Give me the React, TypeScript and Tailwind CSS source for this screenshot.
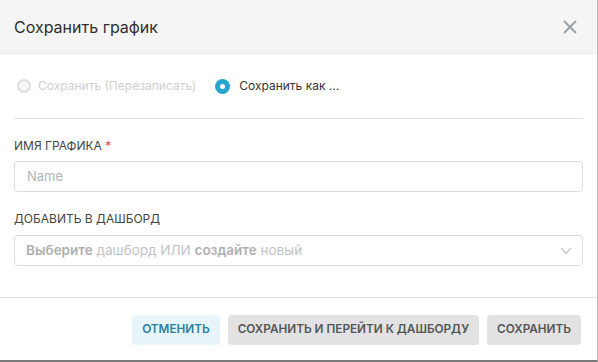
import React from "react";

export default function App() {
  return (
    <div className="w-[598px] h-[362px] bg-white flex flex-col border-r border-r-[#bdbdbd] border-b-2 border-b-[#7a7a7a]" style={{ fontFamily: "Inter, 'Noto Sans', sans-serif" }}>
      <div className="h-[54px] shrink-0 bg-[#f5f5f5] border-b border-[#e9e9e9] flex items-center justify-between pl-[14px] pr-[19px]">
        <span className="text-[16px] text-[#2f2f2f]">Сохранить график</span>
        <svg width="16" height="16" viewBox="0 0 16 16" fill="none">
          <path d="M2 2 L14 14 M14 2 L2 14" stroke="#9ca0ab" strokeWidth="2" />
        </svg>
      </div>
      <div className="px-[14px] flex flex-col">
        <div className="pt-[14px] pb-[14px] border-b border-[#e0e0e0] flex items-center gap-[19px] h-[65px]">
          <label className="flex items-center gap-[7px] pl-[3px]">
            <span className="w-[14px] h-[14px] rounded-full border-2 border-[#dedede] bg-[#f5f5f5]" />
            <span className="text-[12px] text-[#cfcfcf]">Сохранить (Перезаписать)</span>
          </label>
          <label className="flex items-center gap-[9px]">
            <span className="w-[15px] h-[15px] rounded-full bg-[#26a6cf] flex items-center justify-center">
              <span className="w-[5px] h-[5px] rounded-full bg-white" />
            </span>
            <span className="text-[12px] text-[#333]">Сохранить как ...</span>
          </label>
        </div>
        <div className="mt-[19px] text-[12px] leading-[16px] text-[#444] uppercase">
          ИМЯ ГРАФИКА<span className="text-[#e04848]"> *</span>
        </div>
        <div className="mt-[7px] h-[31px] border border-[#dcdce4] rounded-[4px] flex items-center px-[12px] text-[13px] text-[#b3b3b3]">
          Name
        </div>
        <div className="mt-[19px] text-[12px] leading-[16px] text-[#444]">ДОБАВИТЬ В ДАШБОРД</div>
        <div className="mt-[8px] h-[31px] border border-[#dcdce4] rounded-[4px] flex items-center justify-between pl-[11px] pr-[10px] text-[13.5px] text-[#c2c2c2]">
          <span>
            <span className="font-semibold text-[#b0b0b0]">Выберите</span> дашборд ИЛИ <span className="font-semibold text-[#b0b0b0]">создайте</span> новый
          </span>
          <svg width="12" height="8" viewBox="0 0 12 8" fill="none">
            <path d="M1 1 L6 6.5 L11 1" stroke="#c4c4c4" strokeWidth="1.2" />
          </svg>
        </div>
      </div>
      <div className="mt-[31px] border-t border-[#e0e0e0] flex justify-end gap-[8px] px-[16px] pt-[17px]">
        <button className="h-[30px] px-[10px] rounded-[4px] bg-[#e7f5fa] text-[#2a7fa0] text-[11.75px] font-semibold">ОТМЕНИТЬ</button>
        <button className="h-[30px] px-[10px] rounded-[4px] bg-[#e2e2e2] text-[#555] text-[11.75px] font-semibold">СОХРАНИТЬ И ПЕРЕЙТИ К ДАШБОРДУ</button>
        <button className="h-[30px] px-[10px] rounded-[4px] bg-[#e2e2e2] text-[#555] text-[11.75px] font-semibold">СОХРАНИТЬ</button>
      </div>
    </div>
  );
}
